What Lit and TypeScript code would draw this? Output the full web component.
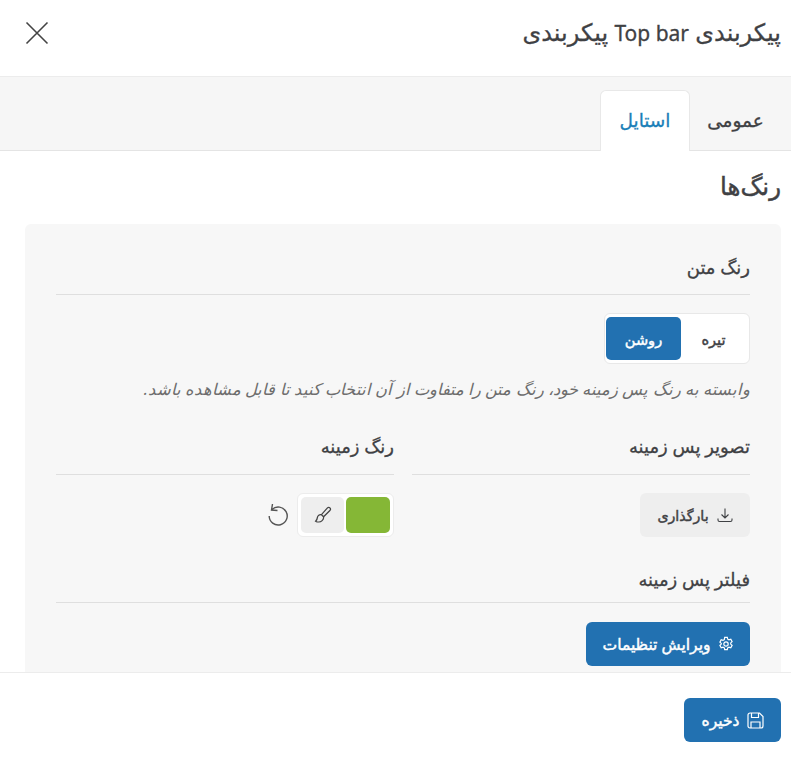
import { LitElement, html, css } from "lit";
import { customElement } from "lit/decorators.js";

@customElement("app-root")
export class AppRoot extends LitElement {
  static styles = css`
    :host { display: block; width: 791px; height: 764px; overflow: hidden; background: #fff; color: #3f4144;
      font-family: "Noto Sans", "DejaVu Sans", sans-serif; }
    * { box-sizing: border-box; }
    svg { display: block; flex: none; fill: none; stroke: currentColor; }
    .app { display: flex; flex-direction: column; height: 764px; }
    .header { height: 77px; flex: none; display: flex; align-items: center; justify-content: space-between; border-bottom: 1px solid #ececec; padding: 0 10px 12px 25px; }
    .header h1 { margin: 0; font-size: 24px; font-weight: 400; -webkit-text-stroke: 0.3px currentColor; line-height: 28px; }
    .header h1 span { font-size: 21px; }
    .close { color: #444; margin-top: 2px; }
    .tabs { height: 74px; flex: none; display: flex; align-items: flex-end; background: #f6f6f6; border-bottom: 1px solid #e4e4e4; padding-right: 10px; }
    .tab { width: 91px; height: 60px; display: flex; align-items: center; justify-content: center; padding-bottom: 4px; font-size: 18.5px; font-weight: 400; -webkit-text-stroke: 0.3px currentColor; margin-bottom: -1px; }
    .tab.active { width: 90px; height: 61px; background: #fff; border: 1px solid #e8e8e8; border-bottom: 0; border-radius: 6px 6px 0 0; color: #1a7fb8; }
    .body { flex: 1; min-height: 0; overflow: hidden; padding: 0 10px; }
    h2 { margin: 0 0 5px; height: 68px; display: flex; align-items: center; font-size: 24.5px; font-weight: 400; -webkit-text-stroke: 0.45px currentColor; }
    .card { background: #f7f7f7; margin: 0 0 0 15px; padding: 31px 31px 0; border-radius: 6px 6px 0 0; height: 448px; }
    .label { height: 40px; border-bottom: 1px solid #dfdfdf; font-size: 18px; font-weight: 400; -webkit-text-stroke: 0.3px currentColor; line-height: 25px; }
    .seg { display: inline-flex; width: 146px; height: 51px; margin-top: 18px; padding: 3px 3px 3px 1px; background: #fff; border: 1px solid #e8e8e8; border-radius: 6px; font-size: 14.6px; -webkit-text-stroke: 0.45px currentColor; }
    .seg span { flex: 1; display: flex; align-items: center; justify-content: center; border-radius: 5px; }
    .seg .on { flex: none; width: 75px; background: #2271b1; color: #fff; }
    .seg-wrap { display: flex; }
    .hint { margin: 13px 0 0; font-size: 16.3px; font-style: italic; color: #6d6d6d; line-height: 24px; height: 24px; white-space: nowrap; }
    .cols { display: grid; grid-template-columns: 338px 338px; gap: 18px; margin-top: 34px; }
    .cols .label { line-height: 23px; }
    .row { display: flex; align-items: center; gap: 7px; margin-top: 18px; height: 44px; }
    .btn { display: inline-flex; align-items: center; justify-content: center; gap: 7px; border-radius: 6px; height: 44px; font-size: 15.6px; -webkit-text-stroke: 0.45px currentColor; }
    .upload { width: 110px; background: #eee; font-size: 14.2px; gap: 8px; }
    .swatches { display: flex; gap: 2px; width: 97px; height: 44px; padding: 3px; background: #fff; border: 1px solid #ececec; border-radius: 6px; }
    .swatch { width: 44px; border-radius: 5px; background: #85b736; }
    .brush { flex: 1; border-radius: 5px; background: #eee; display: flex; align-items: center; justify-content: center; color: #444; }
    .reset { color: #555; margin-right: 2px; }
    .filter { margin-top: 26px; }
    .filter .label { padding-top: 4px; }
    .primary { background: #2271b1; color: #fff; }
    .edit { width: 164px; margin-top: 19px; }
    .footer { height: 92px; flex: none; border-top: 1px solid #ececec; padding: 25px 10px 0; display: flex; }
    .save { width: 97px; }
  `;

  render() {
    return html`<div class="app" dir="rtl">
      <header class="header">
        <h1>پیکربندی <span>Top bar</span> پیکربندی</h1>
        <svg class="close" width="24" height="24" viewBox="0 0 24 24" stroke-width="1.6"><path d="M1.5 1.5 22.5 22.5M22.5 1.5 1.5 22.5"/></svg>
      </header>
      <nav class="tabs">
        <div class="tab">عمومی</div>
        <div class="tab active">استایل</div>
      </nav>
      <main class="body">
        <h2>رنگ‌ها</h2>
        <section class="card">
          <div class="label">رنگ متن</div>
          <div class="seg-wrap"><div class="seg"><span>تیره</span><span class="on">روشن</span></div></div>
          <p class="hint">وابسته به رنگ پس زمینه خود، رنگ متن را متفاوت از آن انتخاب کنید تا قابل مشاهده باشد.</p>
          <div class="cols">
            <div>
              <div class="label">تصویر پس زمینه</div>
              <div class="row">
                <span class="btn upload">
                  <svg width="16" height="16" viewBox="0 0 16 16" stroke-width="1.1"><path d="M8 1.5v9.5M4.5 7.5 8 11l3.5-3.5M1 11.5v1.5a1.5 1.5 0 0 0 1.5 1.5h11a1.5 1.5 0 0 0 1.5-1.5v-1.5"/></svg>
                  بارگذاری
                </span>
              </div>
            </div>
            <div>
              <div class="label">رنگ زمینه</div>
              <div class="row">
                <div class="swatches">
                  <div class="swatch"></div>
                  <div class="brush">
                    <svg width="19" height="19" viewBox="0 0 18 18" stroke-width="1.2"><path d="M16 1.8a1.6 1.6 0 0 0-2.3 0L8 8.2 10 10.2l6-6a1.7 1.7 0 0 0 0-2.4ZM8 8.2c-2-.4-3.6.9-3.8 2.6-.1 1.2-.7 2.6-1.7 3.6 1.6 1 4.4 1 5.9-.3 1.3-1.1 1.9-2.5 1.6-3.9"/></svg>
                  </div>
                </div>
                <svg class="reset" width="20" height="24" viewBox="0 0 20 24" stroke-width="1.4"><path d="M4 6.5A9 9 0 1 1 1.2 13M4.5 1 3.5 7l6 .5"/></svg>
              </div>
            </div>
          </div>
          <div class="filter">
            <div class="label">فیلتر پس زمینه</div>
            <span class="btn primary edit">
              <svg width="16" height="16" viewBox="0 0 16 16" stroke-width="1.2"><path d="M6.7 1.3h2.6l.4 1.9 1.3.7 1.8-.6 1.3 2.3-1.4 1.3v1.2l1.4 1.3-1.3 2.3-1.8-.6-1.3.7-.4 1.9H6.7l-.4-1.9-1.3-.7-1.8.6-1.3-2.3 1.4-1.3V7.4L1.9 6.1l1.3-2.3 1.8.6 1.3-.7Z"/><circle cx="8" cy="8" r="2.2"/></svg>
              ویرایش تنظیمات
            </span>
          </div>
        </section>
      </main>
      <footer class="footer">
        <span class="btn primary save">
          <svg width="17" height="17" viewBox="0 0 17 17" stroke-width="1.2"><path d="M1 3a2 2 0 0 1 2-2h9.5L16 4.5V14a2 2 0 0 1-2 2H3a2 2 0 0 1-2-2ZM4.5 1v4.5h7V1M4 16v-6h9v6"/></svg>
          ذخیره
        </span>
      </footer>
    </div>`;
  }
}
